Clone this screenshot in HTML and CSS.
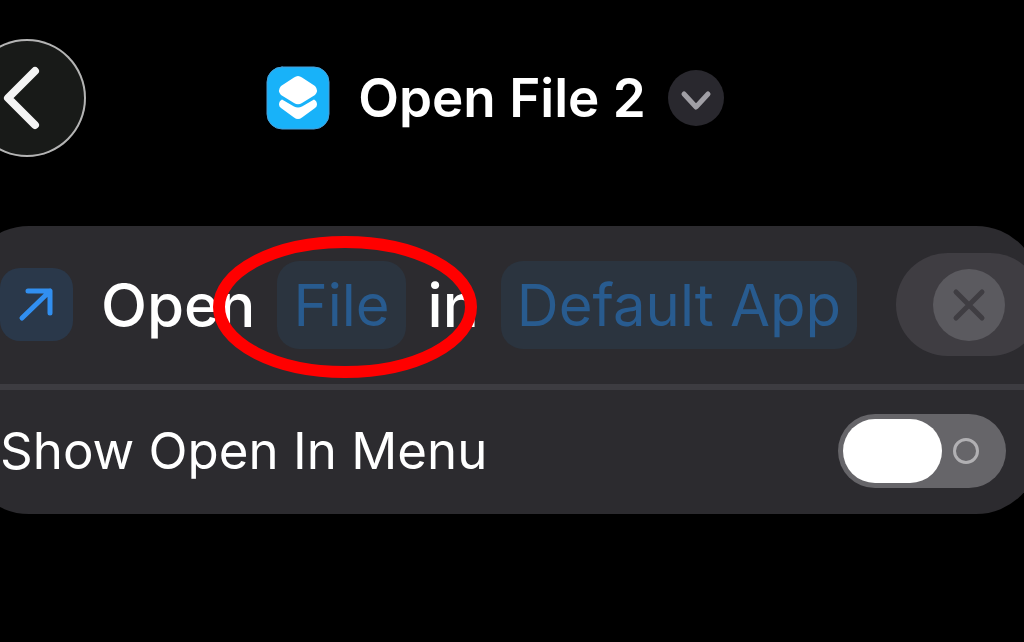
FILE: index.html
```html
<!DOCTYPE html>
<html lang="en">
<head>
<meta charset="utf-8">
<meta name="viewport" content="width=device-width, initial-scale=1">
<title>Open File 2</title>
<link rel="stylesheet" href="styles.css">
</head>
<body>
<header class="topbar">
  <button class="back" type="button" aria-label="Back">
    <svg viewBox="0 0 118 118" aria-hidden="true"><path d="M67 32 40 59 67 86"/></svg>
  </button>
  <div class="heading">
    <svg class="logo" viewBox="0 0 64 64" aria-hidden="true">
      <rect class="logo-tile" x="1" y="1" width="62" height="62" rx="15"/>
      <path class="logo-layer" d="M16 33.500 28 40.500Q32 42.500 36 40.500L48 33.500Q51 35 51 38.500Q51 40.500 49 42L36 51.500Q32 54.500 28 51.500L15 42Q13 40.500 13 38.500Q13 35 16 33.500Z"/>
      <path class="logo-layer" d="M15 20 28 11.500Q32 8.500 36 11.500L49 20Q53 24.500 49 29L36 37Q32 39.500 28 37L15 29Q11 24.500 15 20Z"/>
    </svg>
    <h1 class="title">Open File 2</h1>
    <button class="more" type="button" aria-label="Shortcut options">
      <svg viewBox="0 0 56 56" aria-hidden="true"><path d="M16 24 28 37 40 24"/></svg>
    </button>
  </div>
</header>
<main class="card">
  <section class="row action">
    <svg class="action-icon" viewBox="0 0 73 73" aria-hidden="true"><path d="M22 50 50 23M28 23H50V45"/></svg>
    <div class="sentence">
      <span class="word">Open</span>
      <button class="token" type="button">File</button>
      <span class="word">in</span>
      <button class="token" type="button">Default App</button>
    </div>
    <button class="clear" type="button" aria-label="Remove action">
      <svg viewBox="0 0 72 72" aria-hidden="true"><circle cx="36" cy="36" r="36"/><path d="M23 23 49 49M49 23 23 49"/></svg>
    </button>
    <svg class="marker" viewBox="0 0 264 142" aria-hidden="true"><ellipse cx="132" cy="71" rx="126" ry="65"/></svg>
  </section>
  <section class="row option">
    <label for="show-menu">Show Open In Menu</label>
    <input class="switch" id="show-menu" type="checkbox" role="switch">
  </section>
</main>
</body>
</html>
```
FILE: styles.css
```css
* {
  box-sizing: border-box;
}

body {
  margin: 0;
  background: #000;
  color: #fff;
  font-family: Inter, "Liberation Sans", sans-serif;
  overflow: hidden;
}

button {
  border: 0;
  padding: 0;
  color: inherit;
  font: inherit;
}

svg {
  display: block;
  fill: none;
  stroke-linecap: round;
  stroke-linejoin: round;
}

.topbar {
  display: grid;
  grid-template-columns: 118px 1fr 118px;
  align-items: center;
  margin: 0 2px 0 -32px;
  padding: 39px 0 69px;
}

.back {
  height: 118px;
  border-radius: 50%;
  background: #181a18;
  box-shadow: inset 0 0 0 2px #b4b4b4;
}

.back svg {
  stroke: #f4f4f4;
  stroke-width: 8;
}

.heading {
  display: flex;
  align-items: center;
  justify-content: center;
}

.logo {
  width: 64px;
  margin-right: 28px;
}

.logo-tile {
  fill: #18b2f9;
  stroke: #4a9fd8;
  stroke-width: 1;
}

.logo-layer {
  fill: #fff;
}

.title {
  margin: 0;
  font-size: 53px;
  line-height: 64px;
  font-weight: 600;
}

.more {
  width: 56px;
  height: 56px;
  margin-left: 22px;
  border-radius: 50%;
  background: #29282e;
}

.more svg {
  stroke: #a09fa5;
  stroke-width: 5;
}

.card {
  margin: 0 -16px 0 -35px;
  border-radius: 64px;
  background: #2c2b2f;
  overflow: hidden;
}

.row {
  display: flex;
  align-items: center;
  padding-left: 35px;
}

.action {
  position: relative;
  height: 164px;
  padding-bottom: 1px;
  border-bottom: 6px solid #3d3c41;
}

.action-icon {
  width: 73px;
  margin-right: 28px;
  border-radius: 20px;
  background: #2a384a;
  stroke: #318ff0;
  stroke-width: 5;
}

.sentence {
  display: flex;
  flex: 1;
  align-items: center;
  gap: 22px;
  font-size: 58px;
  line-height: 88px;
  white-space: nowrap;
}

.word {
  font-size: 60px;
  font-weight: 500;
}

.token {
  padding: 0 16px;
  border-radius: 22px;
  background: #2b343f;
  color: #285b8f;
}

.clear {
  display: grid;
  place-items: center;
  width: 146px;
  height: 103px;
  margin-right: -2px;
  border-radius: 52px;
  background: #3f3d42;
}

.clear svg {
  width: 72px;
  fill: #5b5a5f;
}

.clear path {
  stroke: #3f3d42;
  stroke-width: 5;
}

.marker {
  position: absolute;
  left: 248px;
  top: 10px;
  width: 264px;
  stroke: #f00;
  stroke-width: 12;
}

.option {
  justify-content: space-between;
  padding-right: 34px;
  padding-bottom: 2px;
  height: 124px;
  font-size: 51px;
  line-height: 64px;
}

.switch {
  display: flex;
  appearance: none;
  align-items: center;
  gap: 11px;
  width: 168px;
  height: 74px;
  margin: 0;
  padding: 5px;
  border-radius: 37px;
  background: #666569;
}

.switch::before {
  content: "";
  width: 99px;
  height: 64px;
  border-radius: 32px;
  background: #fff;
}

.switch::after {
  content: "";
  box-sizing: border-box;
  width: 26px;
  height: 26px;
  border: 3px solid #b1b0b3;
  border-radius: 50%;
}

.switch:checked {
  flex-direction: row-reverse;
  background: #34c759;
}
```
